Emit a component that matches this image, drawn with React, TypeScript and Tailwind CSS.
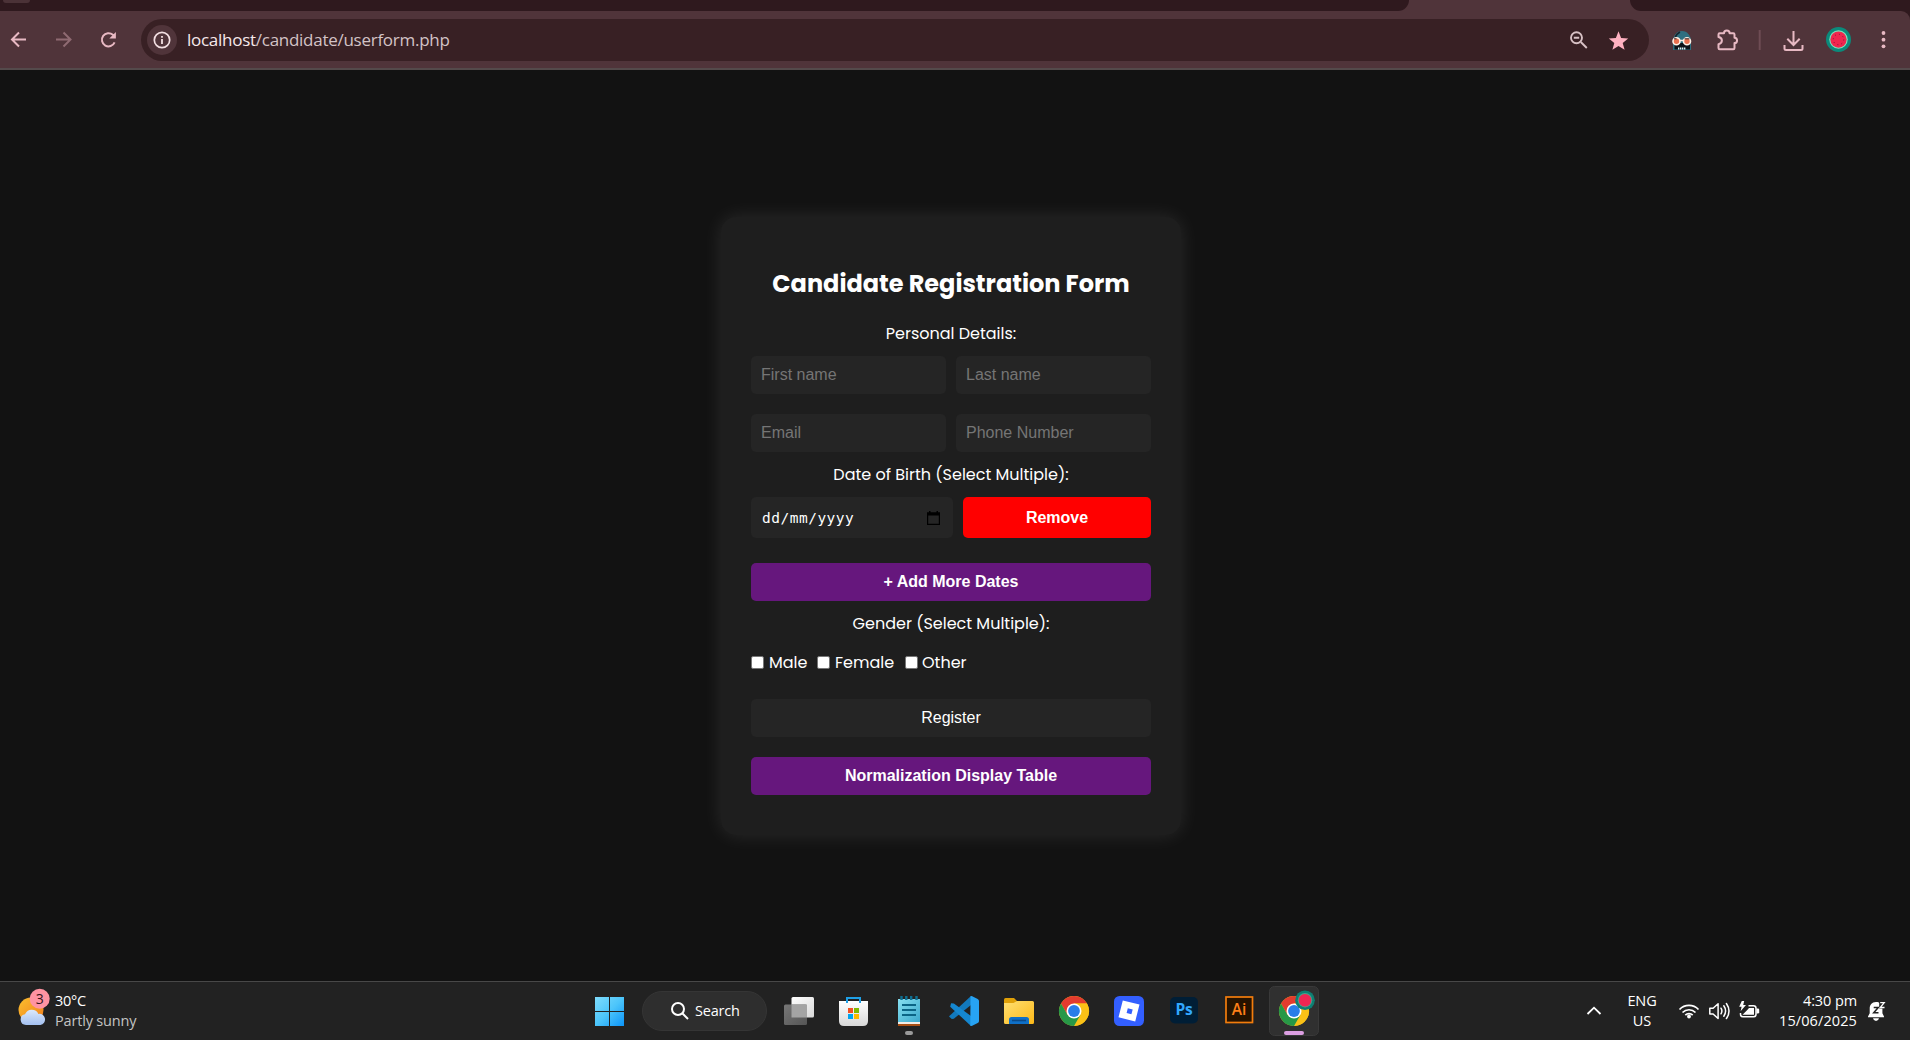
import type { ReactNode } from 'react';

/* ---------- Browser chrome ---------- */

function TabStrip() {
  return (
    <div className="flex h-[11px] shrink-0 bg-[#50343a]">
      <div className="h-[11px] w-[1409px] rounded-br-[15px] bg-[#2f191e]">
        <div className="ml-[3px] h-[3px] w-[27px] rounded-b-[8px] bg-[#4b3237]" />
      </div>
      <div className="w-[221px]" />
      <div className="h-[11px] flex-1 rounded-bl-[13px] bg-[#2f191e]" />
    </div>
  );
}

function Toolbar() {
  return (
    <div className="h-[57px] shrink-0 bg-[#2f191e]">
      <div className="flex h-full items-center rounded-tr-[9px] bg-[#50343a] pb-px">
        <svg width="141" height="56" viewBox="0 0 141 56" fill="none" strokeWidth="2">
          <path d="M26 28.500H12.600M19 21.500l-7 7 7 7" stroke="#e8b9c3" />
          <path d="M56 28.500H69.400M63.500 21.500l7 7-7 7" stroke="#8f6a72" />
          <path d="M114.600 31.400a6.600 6.600 0 1 1 -1.700-7.600l1.600 1.600" stroke="#e8b9c3" />
          <path d="M115.900 21v6.600h-6.600z" fill="#e8b9c3" />
        </svg>
        <div className="mt-[2px] flex h-[42px] w-[1508px] items-center rounded-full bg-[#382024] pl-[6px]">
          <div className="flex size-[30px] items-center justify-center rounded-full bg-[#50343a]">
            <svg width="18" height="18" viewBox="0 0 18 18" fill="none" stroke="#f3dfe2">
              <circle cx="9" cy="9" r="7.700" strokeWidth="1.700" />
              <path d="M9 8v5M9 4.900v1.800" strokeWidth="1.800" />
            </svg>
          </div>
          <div className="ml-[10px] font-['Open_Sans','Noto_Sans',sans-serif] text-[17px] leading-[24px] tracking-[-0.27px] whitespace-nowrap text-[#d3c3c6]">
            <span className="text-[#f6e9eb]">localhost</span>/candidate/userform.php
          </div>
          <svg className="mr-[20px] ml-auto" width="60" height="24" viewBox="0 0 60 24">
            <g fill="none" stroke="#d8c1c5" strokeWidth="1.900">
              <circle cx="7.500" cy="9.700" r="5.500" />
              <path d="M11.800 14l6 6M4.800 9.700h5.400" />
            </g>
            <path d="M49.500 3.300l2.600 6.700 7.100.4-5.500 4.500 1.900 6.900-6.100-3.900-6.100 3.900 1.900-6.900-5.500-4.500 7.100-.4z" fill="#ffb1c1" />
          </svg>
        </div>
        <svg width="261" height="56" viewBox="1649 11 261 56" fill="none">
          {/* masked-face extension */}
          <g transform="translate(4 0)">
            <path d="M1669 50V41c0-5 3.600-10 9-10s9 5 9 10v9z" fill="#2f6f80" />
            <path d="M1670.500 43h15.500v6.500h-15.500z" fill="#0c1218" />
            <path d="M1671 38c1-3 3-5 5-6" stroke="#14252e" strokeWidth="1.500" />
            <circle cx="1672.500" cy="41.300" r="3.500" fill="#e8704f" stroke="#fff1e6" strokeWidth="1.600" />
            <circle cx="1683" cy="41.300" r="3.500" fill="#e8704f" stroke="#fff1e6" strokeWidth="1.600" />
            <path d="M1672.500 38.800h-2.500M1685.500 38.800h-5" stroke="#3a2a2c" strokeWidth="1" />
            <path d="M1675.500 40.500h4.500" stroke="#fff1e6" strokeWidth="1.500" />
            <path d="M1674 48.500h8" stroke="#d9f2f5" strokeWidth="2" strokeDasharray="1.300 .6" />
          </g>
          {/* extensions puzzle */}
          <path
            d="M1719.700 33.200h4.300c0-3.600 5.600-3.600 5.600 0h3.700q1.200 0 1.200 1.200v3.300c3.400.2 3.400 5.200 0 5.400v5q0 1.200-1.200 1.200h-13.600q-1.200 0-1.200-1.200v-3.900c4.500-.8 4.500-6.400 0-7.200v-2.600q0-1.200 1.200-1.200z"
            stroke="#e8b9c3"
            strokeWidth="2"
            strokeLinejoin="round"
          />
          <path d="M1759.700 30v20" stroke="#6e4c54" strokeWidth="2" />
          <path
            d="M1793.500 31v13.500M1787.300 38.800l6.200 6.200 6.200-6.200M1784.500 45v3.500q0 1.500 1.500 1.500h15q1.500 0 1.500-1.500V45"
            stroke="#e8b9c3"
            strokeWidth="2"
          />
          <Melon cx={1838.5} cy={39.5} r={12.5} />
          <g fill="#e8b9c3">
            <circle cx="1883.500" cy="33" r="1.900" />
            <circle cx="1883.500" cy="39.700" r="1.900" />
            <circle cx="1883.500" cy="46.300" r="1.900" />
          </g>
        </svg>
      </div>
    </div>
  );
}

function Melon({ cx, cy, r }: { cx: number; cy: number; r: number }) {
  return (
    <g>
      <circle cx={cx} cy={cy} r={r} fill="#0b8a7b" />
      <circle cx={cx} cy={cy} r={r * 0.74} fill="#7fe3bd" />
      <circle cx={cx} cy={cy} r={r * 0.65} fill="#f0264f" />
      <circle cx={cx} cy={cy} r={r * 0.42} fill="none" stroke="#7d1435" strokeWidth="1" strokeDasharray="1 3.100" />
    </g>
  );
}

/* ---------- Form ---------- */

function Label({ children }: { children: ReactNode }) {
  return <div className="text-center text-[16px] leading-[24px] whitespace-nowrap">{children}</div>;
}

function Field({ placeholder }: { placeholder: string }) {
  return (
    <input
      placeholder={placeholder}
      className="h-[38px] min-w-0 flex-1 rounded-[5px] bg-[#252525] px-[10px] font-['Liberation_Sans',Arial,sans-serif] text-[16px] text-white placeholder:text-[#757575]"
    />
  );
}

function Check({ children }: { children: ReactNode }) {
  return (
    <label className="flex items-center">
      <span className="-mt-px size-[13px] rounded-[2px] border border-[#767676] bg-white" />
      {children}
    </label>
  );
}

const wide = "block h-[38px] w-full rounded-[5px] font-['Liberation_Sans',Arial,sans-serif] text-[16px]";

function Card() {
  return (
    <div className="h-[618px] w-[460px] rounded-[15px] bg-[#1e1e1e] px-[30px] pt-[49px] font-['Poppins','Inter',sans-serif] text-white shadow-[0_0_20px_rgba(255,255,255,0.1)]">
      <h2 className="text-center text-[24px] leading-[36px] font-bold whitespace-nowrap">Candidate Registration Form</h2>
      <div className="mt-[20px]">
        <Label>Personal Details:</Label>
      </div>
      <div className="mt-[10px] flex gap-[10px]">
        <Field placeholder="First name" />
        <Field placeholder="Last name" />
      </div>
      <div className="mt-[20px] flex gap-[10px]">
        <Field placeholder="Email" />
        <Field placeholder="Phone Number" />
      </div>
      <div className="mt-[11px]">
        <Label>Date of Birth (Select Multiple):</Label>
      </div>
      <div className="mt-[10px] flex gap-[10px]">
        <div className="flex h-[41px] w-[202px] items-center justify-between rounded-[5px] bg-[#252525] pr-[13px] pl-[11px]">
          <span className="pt-[2px] font-['DejaVu_Sans_Mono',monospace] text-[14.5px] tracking-[0.5px] whitespace-nowrap">dd/mm/yyyy</span>
          <svg width="13" height="14" viewBox="0 0 13 14">
            <path d="M.6 2.200h11.800v11.200H.6z" fill="none" stroke="#000" strokeWidth="1.200" />
            <path d="M0 1.500h13V4.500H0zM2 0h1.500v2H2zM9.500 0H11v2H9.500z" fill="#000" />
          </svg>
        </div>
        <button className="h-[41px] flex-1 rounded-[5px] bg-[#ff0000] font-['Liberation_Sans',Arial,sans-serif] text-[16px] font-bold">Remove</button>
      </div>
      <button className={`${wide} mt-[25px] bg-[#66177d] font-bold`}>+ Add More Dates</button>
      <div className="mt-[11px]">
        <Label>Gender (Select Multiple):</Label>
      </div>
      <div className="mt-[15px] flex h-[24px] text-[16px] leading-[24px]">
        <Check>
          <span className="ml-[5px] w-[48px]">Male</span>
        </Check>
        <Check>
          <span className="ml-[5px] w-[70px]">Female</span>
        </Check>
        <Check>
          <span className="ml-[4px]">Other</span>
        </Check>
      </div>
      <button className={`${wide} mt-[24px] bg-[#252525]`}>Register</button>
      <button className={`${wide} mt-[20px] bg-[#66177d] font-bold`}>Normalization Display Table</button>
    </div>
  );
}

/* ---------- Taskbar ---------- */

function Cell({ x, w = 55, children }: { x: number; w?: number; children: ReactNode }) {
  return (
    <svg className="shrink-0" width={w} height="58" viewBox={`${x} 982 ${w} 58`} fill="none">
      {children}
    </svg>
  );
}

function ChromeLogo({ cx, cy }: { cx: number; cy: number }) {
  return (
    <g transform={`translate(${cx} ${cy})`}>
      <circle r="15" fill="#fbc116" />
      <path d="M-13 -7.500A15 15 0 0 1 13 -7.500L0 -7.500 -6.500 3.750z" fill="#e33b2e" />
      <path d="M13 -7.500A15 15 0 0 1 0 15L6.500 3.750 0 -7.500z" fill="#fbc116" />
      <path d="M-13 -7.500A15 15 0 0 0 0 15L6.500 3.750 -6.500 3.750z" fill="#279847" />
      <circle r="7.500" fill="#fff" />
      <circle r="5.900" fill="#2a7de9" />
    </g>
  );
}

function Weather() {
  return (
    <svg width="55" height="58" viewBox="0 982 55 58">
      <defs>
        <linearGradient id="sun" x1="0" y1="0" x2="1" y2="1">
          <stop offset="0" stopColor="#fcc02e" />
          <stop offset="1" stopColor="#f07d1c" />
        </linearGradient>
        <linearGradient id="cloud" x1="0" y1="0" x2="0" y2="1">
          <stop offset="0" stopColor="#dce9fb" />
          <stop offset="1" stopColor="#a3c0f0" />
        </linearGradient>
      </defs>
      <circle cx="31" cy="1010" r="12.500" fill="url(#sun)" />
      <path d="M26 1025a5.400 5.400 0 0 1-1-10.700 7.300 7.300 0 0 1 13.400-.4 5.600 5.600 0 0 1 2 11.100z" fill="url(#cloud)" />
      <circle cx="39.700" cy="998.800" r="10" fill="#ff93a2" />
      <text x="39.700" y="1004" textAnchor="middle" fontFamily="Open Sans, Noto Sans, sans-serif" fontSize="14" fill="#35141b">3</text>
    </svg>
  );
}

function TaskIcons() {
  return (
    <div className="flex">
      <Cell x={771}>
        <defs>
          <linearGradient id="tvBack" x1="0" y1="0" x2="1" y2="1">
            <stop offset="0" stopColor="#777" />
            <stop offset="1" stopColor="#555" />
          </linearGradient>
          <linearGradient id="tvFront" x1="0" y1="0" x2="1" y2="1">
            <stop offset="0" stopColor="#fff" />
            <stop offset="1" stopColor="#d9d9d9" />
          </linearGradient>
        </defs>
        <rect x="791.500" y="997" width="22.500" height="20.500" rx="1.500" fill="url(#tvFront)" />
        <rect x="784" y="1004.500" width="23" height="20.500" rx="1.500" fill="url(#tvBack)" />
        <path d="M791.500 1004.500H807v13h-15.500z" fill="#a4a4a4" />
      </Cell>
      <Cell x={826}>
        <defs>
          <linearGradient id="bag" x1="0" y1="0" x2="0" y2="1">
            <stop offset="0" stopColor="#fff" />
            <stop offset="1" stopColor="#d8d8d8" />
          </linearGradient>
        </defs>
        <path d="M839 1001h29v20q0 5-5 5h-19q-5 0-5-5z" fill="url(#bag)" />
        <path d="M847 1003v-5h13v5" stroke="#1fa0e6" strokeWidth="2" />
        <path d="M848 1008h5v5h-5z" fill="#f25022" />
        <path d="M854 1008h5v5h-5z" fill="#7fba00" />
        <path d="M848 1014h5v5h-5z" fill="#00a4ef" />
        <path d="M854 1014h5v5h-5z" fill="#ffb900" />
      </Cell>
      <Cell x={881}>
        <defs>
          <linearGradient id="pad" x1="0" y1="0" x2="1" y2="1">
            <stop offset="0" stopColor="#86dff0" />
            <stop offset="1" stopColor="#3ba8cc" />
          </linearGradient>
        </defs>
        <path d="M898 1018h22v8h-22z" fill="#a84f14" />
        <path d="M898 1018h22v6h-22z" fill="#f2ece6" />
        <path d="M898 999h22v23h-22z" fill="url(#pad)" />
        <path d="M902 1005h14M902 1010h14M902 1015h14" stroke="#0b6485" strokeWidth="1.800" />
        <path d="M901.500 996v4M906.300 996v4M911.200 996v4M916.500 996v4" stroke="#0e6f92" strokeWidth="2.400" />
        <rect x="905" y="1031" width="8" height="4" rx="2" fill="#9a9a9a" />
      </Cell>
      <Cell x={936}>
        <path d="M971 996l-20.800 19.300-1.200 1.200 2.800 2.500 2-.3L971 1005z" fill="#1279bd" />
        <path d="M971 1026l-20.800-19.300.9-3.400 2.800.2L971 1016z" fill="#1587d0" />
        <path d="M970.500 996.200l1.200-.2 6 2.900q1.300.7 1.300 2.100v20q0 1.400-1.300 2.100l-6 2.900-1.400-.3z" fill="#27a3f3" />
      </Cell>
      <Cell x={991}>
        <defs>
          <linearGradient id="folder" x1="0" y1="0" x2="1" y2="1">
            <stop offset="0" stopColor="#ffdf72" />
            <stop offset="1" stopColor="#fcb918" />
          </linearGradient>
        </defs>
        <path d="M1004 1003v-3.500q0-1.500 1.500-1.500h8.500l3 3v4h-13z" fill="#e0a008" />
        <path d="M1004 1003h9.500l3.500-2h15.500q1.500 0 1.500 1.500v20q0 1.500-1.500 1.500h-27q-1.500 0-1.500-1.500z" fill="url(#folder)" />
        <path d="M1009 1024v-4.500q0-2.500 2.500-2.500h15q2.500 0 2.500 2.500v4.500z" fill="#0f70c8" />
        <path d="M1012 1020.500h14" stroke="#0a4a8a" strokeWidth="1.600" />
      </Cell>
      <Cell x={1046}>
        <ChromeLogo cx={1074} cy={1011} />
      </Cell>
      <Cell x={1101}>
        <rect x="1114" y="996" width="30" height="30" rx="5.500" fill="#335fff" />
        <path fillRule="evenodd" d="M1122.800 1000.500l16.700 4-4.300 17-16.700-4.300zM1127.800 1008.200l-1.200 4.800 4.800 1.300 1.300-4.800z" fill="#fff" />
      </Cell>
      <Cell x={1156}>
        <rect x="1170" y="997" width="28" height="26.500" rx="5" fill="#001e36" />
        <text x="1184" y="1015.300" textAnchor="middle" fontFamily="Open Sans, sans-serif" fontSize="15.500" fontWeight="700" letterSpacing="-0.3" fill="#31a8ff">Ps</text>
      </Cell>
      <Cell x={1211}>
        <rect x="1226" y="997" width="26.500" height="25.500" fill="#261300" stroke="#f27d0c" strokeWidth="1.700" />
        <text x="1239" y="1015.300" textAnchor="middle" fontFamily="Open Sans, sans-serif" fontSize="15.500" fontWeight="600" fill="#ff7f18">Ai</text>
      </Cell>
      <Cell x={1266}>
        <rect x="1269.500" y="986.500" width="49" height="49" rx="5" fill="#303030" stroke="#393939" />
        <ChromeLogo cx={1294} cy={1011} />
        <circle cx="1305" cy="1000.200" r="9.800" fill="#0d7f73" />
        <circle cx="1305" cy="1000.200" r="7.200" fill="#45a58c" />
        <circle cx="1305" cy="1000.200" r="6.300" fill="#ee2653" />
        <rect x="1284" y="1031" width="20" height="4" rx="2" fill="#dc9fe2" />
      </Cell>
    </div>
  );
}

function Tray() {
  return (
    <div className="ml-auto flex items-center">
      <Cell x={1577} w={50}>
        <path d="M1587.500 1014l6.500-6.300 6.500 6.300" stroke="#fff" strokeWidth="1.800" />
      </Cell>
      <div className="w-[30px] text-center leading-[20px]">
        ENG
        <br />
        US
      </div>
      <Cell x={1657} w={112}>
        <g stroke="#fff" strokeWidth="1.700">
          <path d="M1679.500 1009.500a13.200 13.200 0 0 1 19 0" />
          <path d="M1682.500 1012.500a9 9 0 0 1 13 0" />
          <path d="M1685.300 1015.200a5.200 5.200 0 0 1 7.400 0" />
        </g>
        <circle cx="1689" cy="1016.500" r="1.900" fill="#fff" />
        <g stroke="#fff" strokeWidth="1.500" strokeLinejoin="round" strokeLinecap="round">
          <path d="M1709.800 1008.200h3.300l5-4.500v14.800l-5-4.500h-3.300z" />
          <path d="M1721 1008.200q1.800 2.800 0 5.600M1723.800 1005.800q3.600 5.200 0 10.400M1726.400 1003.500q5.200 7.500 0 15" />
        </g>
        <path d="M1748.500 1005.800h5q2.500 0 2.500 2.500v6q0 2.500-2.500 2.500h-10.500q-2.500 0-2.500-2.500V1013" stroke="#fff" strokeWidth="1.500" />
        <path d="M1749 1008h5v6.800h-11.500l5-5z" fill="#fff" />
        <path d="M1756.500 1008.500h1.300q1.400 0 1.400 1.200v2.600q0 1.200-1.400 1.200h-1.300z" fill="#fff" />
        <path d="M1741.800 1001l-2.600 5.700h2.400l-1 4.600 5.400-6.300h-2.800l1-4z" fill="#fff" />
      </Cell>
      <div className="w-[88px] text-right leading-[20px] whitespace-nowrap">
        4:30 pm
        <div className="tracking-[0.1px]">15/06/2025</div>
      </div>
      <Cell x={1857} w={53}>
        <path d="M1876 1002c-4.300 0-6.300 3-6.300 6.500v4.700l-1.700 3.300v.8h16v-.8l-1.600-3.300v-6c0-2.900-2-5.200-6.400-5.200z" fill="#fff" />
        <path d="M1873 1018.200h6q-.6 2.800-3 2.800t-3-2.800z" fill="#fff" />
        <path d="M1873.700 1007.500h4.600l-4.600 5.200h4.800" stroke="#222" strokeWidth="1.500" />
        <path d="M1879.200 1001.500h6.300v7h-6.300z" fill="#222" />
        <path d="M1880.200 1002.700h4l-4 4.800h4.300" stroke="#fff" strokeWidth="1.300" />
      </Cell>
    </div>
  );
}

function Taskbar() {
  return (
    <div className="flex h-[59px] shrink-0 border-t border-[#484848] bg-[#222222] font-['Open_Sans','Noto_Sans',sans-serif] text-[14.5px] tracking-[-0.1px] text-white">
      <div className="flex w-[582px] items-center">
        <Weather />
        <div className="pb-px leading-[20px]">
          <div className="tracking-[-0.3px]">30°C</div>
          <div className="tracking-[-0.18px] text-[#c4c4c4]">Partly sunny</div>
        </div>
      </div>
      <Cell x={582}>
        <defs>
          <linearGradient id="win" gradientUnits="userSpaceOnUse" x1="595" y1="997" x2="624" y2="1026">
            <stop offset="0" stopColor="#7fdcfc" />
            <stop offset="0.500" stopColor="#4cc5fb" />
            <stop offset="1" stopColor="#0c94f8" />
          </linearGradient>
        </defs>
        <path d="M595 997h14v14h-14zM610 997h14v14h-14zM595 1012h14v14h-14zM610 1012h14v14h-14z" fill="url(#win)" />
      </Cell>
      <div className="mt-[9px] mr-[4px] ml-[5px] flex h-[40px] w-[125px] items-center rounded-full border border-[#353535] bg-[#2e2e2e] pl-[28px]">
        <svg width="18" height="18" viewBox="0 0 18 18" fill="none" stroke="#fff" strokeWidth="2">
          <circle cx="7" cy="7" r="6" />
          <path d="M11.300 11.300l5.700 5.700" />
        </svg>
        <span className="ml-[6px] tracking-[-0.2px]">Search</span>
      </div>
      <TaskIcons />
      <Tray />
    </div>
  );
}

export default function App() {
  return (
    <div className="flex h-[1040px] w-[1910px] flex-col overflow-hidden bg-[#121212]">
      <TabStrip />
      <Toolbar />
      <div className="h-[2px] shrink-0 bg-[#544a4b]" />
      <main className="flex flex-1 justify-center pt-[147px] pr-[8px]">
        <Card />
      </main>
      <Taskbar />
    </div>
  );
}
